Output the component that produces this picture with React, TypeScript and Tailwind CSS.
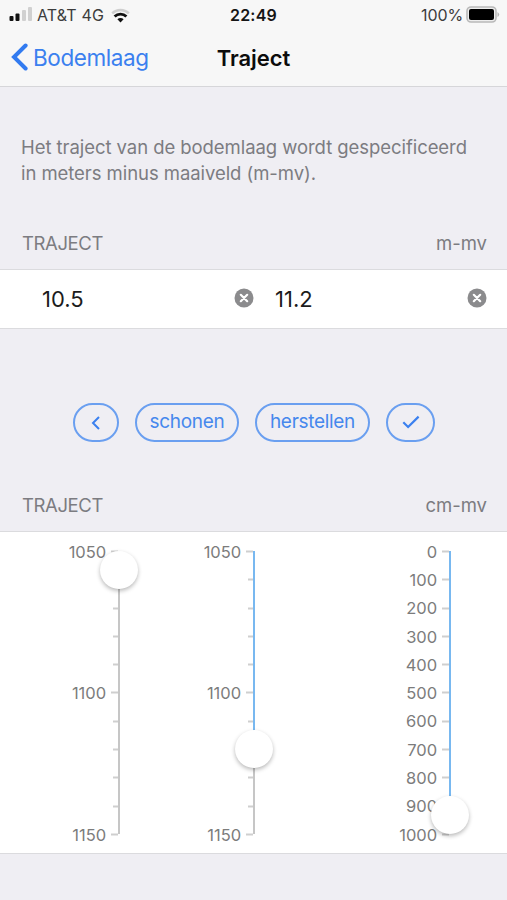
type ScaleProps = {
  labels: string[];
  ticks: number;
  fill: number;
  thumb: number;
  className: string;
};

function ScaleSlider({ labels, ticks, fill, thumb, className }: ScaleProps) {
  const majorEvery = (ticks - 1) / (labels.length - 1);
  return (
    <div className={`flex h-[283px] shrink-0 ${className}`}>
      <div className="flex flex-1 translate-y-[0.6px] flex-col justify-between text-right text-[16.5px] tracking-[-0.05px] text-[#7c7c7c]">
        {labels.map((label) => (
          <div key={label} className="flex h-0 items-center justify-end">
            {label}
          </div>
        ))}
      </div>
      <div className="ml-[5px] flex w-[7px] translate-y-[0.5px] flex-col items-end justify-between">
        {Array.from({ length: ticks }, (_, i) => (
          <div key={i} className="flex h-0 w-full items-center justify-end">
            <span className={i % majorEvery === 0 ? "h-[2px] w-[7px] bg-[#cfcfcf]" : "h-[2px] w-[5px] bg-[#cfcfcf]"} />
          </div>
        ))}
      </div>
      <div className="relative w-[2px] bg-[#c6c6c6]">
        <div className="w-full bg-[#78b8f0]" style={{ height: fill }} />
        <div
          className="absolute -left-[18px] size-[38px] rounded-full bg-white shadow-[0_2px_4px_rgba(0,0,0,0.28)]"
          style={{ top: thumb }}
        />
      </div>
    </div>
  );
}

function ClearButton() {
  return (
    <button aria-label="Wissen" className="mb-[2px] size-[20px]">
      <svg viewBox="0 0 20 20" className="size-full">
        <circle cx="10" cy="10" r="9.5" fill="#8b8b8d" />
        <path d="M6.8 6.8l6.4 6.4M13.2 6.8l-6.4 6.4" stroke="#fff" strokeWidth="2.2" strokeLinecap="round" />
      </svg>
    </button>
  );
}

const pill =
  "flex h-[39px] items-center justify-center rounded-full border-2 border-[#6a9ff0] text-[19px] tracking-[-0.3px] text-[#4688ed]";

export default function App() {
  return (
    <div className="flex h-[900px] w-[507px] flex-col overflow-hidden bg-[#efeef3] font-['Inter','Liberation_Sans',sans-serif]">
      <header className="h-[87px] shrink-0 border-b border-[#d6d6d9] bg-[#f7f7f7]">
        <div className="grid h-[30px] grid-cols-[1fr_auto_1fr] items-center pl-[9px] pr-[7px] text-[16px] text-[#3c3c3c]">
          <div className="flex items-center">
            <svg className="mb-[2px]" width="24" height="16" viewBox="0 0 24 16">
              <rect x="0.5" y="10" width="4" height="5" rx="1" fill="#111" />
              <rect x="6.5" y="7.5" width="4" height="7.5" rx="1" fill="#111" />
              <rect x="13" y="4" width="4" height="11" rx="1" fill="#d0d0d0" />
              <rect x="19" y="1" width="4" height="14" rx="1" fill="#d0d0d0" />
            </svg>
            <span className="ml-[4px] whitespace-nowrap tracking-[0.15px]">AT&amp;T 4G</span>
            <svg className="ml-[7px]" width="19" height="15" viewBox="0 0 19 15">
              <path d="M1.2 5.3a12 12 0 0 1 16.6 0" stroke="#cfcfcf" strokeWidth="2.5" fill="none" />
              <path d="M3.6 8.5a8.3 8.3 0 0 1 11.8 0" stroke="#111" strokeWidth="2.8" fill="none" />
              <path d="M6.4 11.2a4.4 4.4 0 0 1 6.2 0L9.5 14.4z" fill="#111" />
            </svg>
          </div>
          <span className="mr-[2px] text-[16px] font-semibold tracking-[0.2px] text-[#151515]">22:49</span>
          <div className="flex items-center justify-end">
            <span className="tracking-[-0.1px]">100%</span>
            <svg className="ml-[3px] mb-[2px]" width="34" height="17" viewBox="0 0 34 17">
              <rect x="1" y="1" width="29" height="15" rx="4" fill="#ededed" stroke="#b9b9b9" strokeWidth="1.6" />
              <rect x="3" y="3" width="25" height="11" rx="2" fill="#000" />
              <path d="M31.5 6v5q1.7-1 1.7-2.5T31.5 6z" fill="#b5b5b5" />
            </svg>
          </div>
        </div>
        <div className="grid h-[56px] grid-cols-[1fr_auto_1fr] items-center">
          <button className="flex items-center pl-[10px] text-[22.5px] text-[#3b80ef]">
            <svg className="mb-[2px]" width="19" height="28" viewBox="0 0 19 28">
              <path d="M15.6 2.5L4 14l11.6 11.5" fill="none" stroke="#327bf0" strokeWidth="4" strokeLinecap="round" />
            </svg>
            <span className="ml-[4px] tracking-[-0.4px]">Bodemlaag</span>
          </button>
          <h1 className="text-[22px] font-semibold tracking-[-0.05px] text-[#0c0c0c]">Traject</h1>
        </div>
      </header>

      <p className="mt-[47px] shrink-0 whitespace-nowrap pl-[21px] text-[18.5px] leading-[26px] tracking-[-0.06px] text-[#7c7c81]">
        Het traject van de bodemlaag wordt gespecificeerd
        <br />
        in meters minus maaiveld (m-mv).
      </p>

      <div className="mt-[45px] flex h-[26px] shrink-0 items-center justify-between pl-[22px] pr-[20px] text-[18.5px] text-[#7c7c81]">
        <h2 className="tracking-[-0.4px]">TRAJECT</h2>
        <span>m-mv</span>
      </div>
      <div className="mt-[12px] flex h-[60px] shrink-0 items-center border-y border-[#dbdbde] bg-white pl-[42px] pr-[20px] text-[22px] text-[#1c1c1c]">
        <span className="w-[192px]">10.5</span>
        <ClearButton />
        <span className="ml-[21px] flex-1">11.2</span>
        <ClearButton />
      </div>

      <div className="mt-[74px] flex shrink-0 gap-[16px] pl-[73px]">
        <button aria-label="Vorige" className={`${pill} w-[46px]`}>
          <svg width="12" height="16" viewBox="0 0 12 16">
            <path d="M9 2L3 8l6 6" fill="none" stroke="#3b80ef" strokeWidth="2" />
          </svg>
        </button>
        <button className={`${pill} w-[104px]`}>schonen</button>
        <button className={`${pill} w-[115px]`}>herstellen</button>
        <button aria-label="Akkoord" className={`${pill} w-[49px]`}>
          <svg className="mb-[1px]" width="18" height="14" viewBox="0 0 18 14">
            <path d="M1.3 7.3L6.1 12 16.6 1.6" fill="none" stroke="#3b80ef" strokeWidth="2.2" />
          </svg>
        </button>
      </div>

      <div className="mt-[51px] flex h-[26px] shrink-0 items-center justify-between pl-[22px] pr-[20px] text-[18.5px] text-[#7c7c81]">
        <h2 className="tracking-[-0.4px]">TRAJECT</h2>
        <span>cm-mv</span>
      </div>
      <div className="mt-[12px] flex h-[323px] shrink-0 border-y border-[#dbdbde] bg-white pl-[60px] pt-[19px]">
        <ScaleSlider labels={["1050", "1100", "1150"]} ticks={11} fill={0} thumb={0} className="w-[60px]" />
        <ScaleSlider labels={["1050", "1100", "1150"]} ticks={11} fill={180} thumb={179} className="ml-[75px] w-[60px]" />
        <ScaleSlider
          labels={["0", "100", "200", "300", "400", "500", "600", "700", "800", "900", "1000"]}
          ticks={11}
          fill={246}
          thumb={245}
          className="ml-[136px] w-[60px]"
        />
      </div>
    </div>
  );
}
